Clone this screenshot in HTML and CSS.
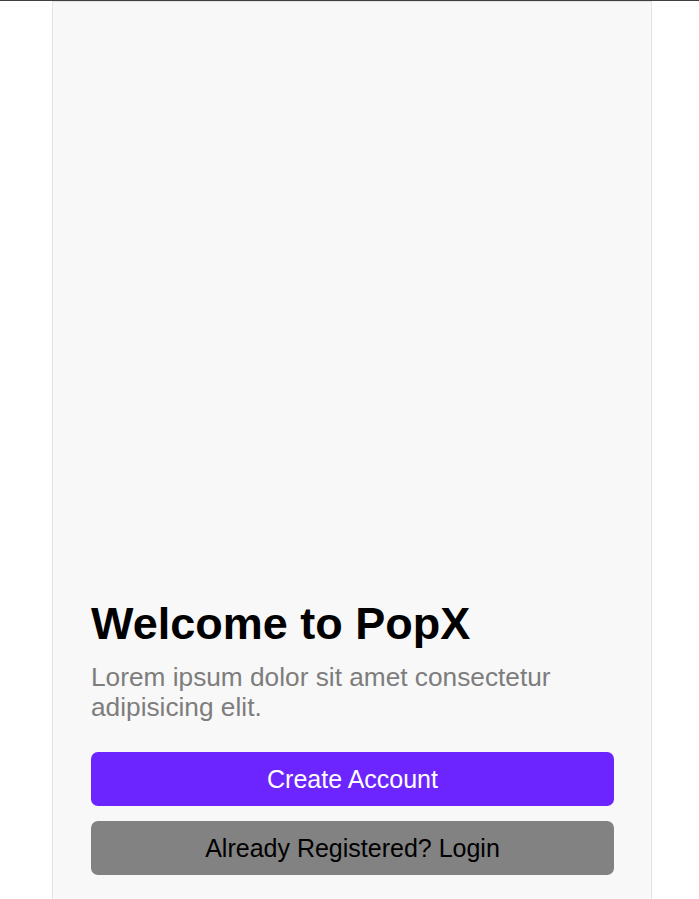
FILE: index.html
```html
<!DOCTYPE html>
<html lang="en">
<head>
<meta charset="utf-8">
<title>PopX</title>
<link rel="stylesheet" href="styles.css">
</head>
<body>
<div class="topline"></div>
<main class="card">
  <section class="welcome">
    <h1 class="title">Welcome to PopX</h1>
    <p class="lead">Lorem ipsum dolor sit amet consectetur adipisicing elit.</p>
    <div class="actions">
      <button class="btn btn-primary">Create Account</button>
      <button class="btn btn-secondary">Already Registered? Login</button>
    </div>
  </section>
</main>
</body>
</html>
```
FILE: styles.css
```css
html, body {
  margin: 0;
  padding: 0;
  height: 100%;
  overflow: hidden;
  background: #ffffff;
  font-family: "Liberation Sans", Arial, sans-serif;
}

.topline {
  height: 1px;
  background: #3c4043;
}

.card {
  box-sizing: border-box;
  width: 600px;
  height: 898px;
  margin-left: 52px;
  background: #f8f8f8;
  border: 1px solid #e2e2e2;
  border-bottom: none;
  padding: 0 37px 24px 38px;
  display: flex;
  flex-direction: column;
  justify-content: flex-end;
}

.welcome {
  display: flex;
  flex-direction: column;
}

.title {
  margin: 0;
  font-size: 45px;
  line-height: 52px;
  font-weight: 700;
  color: #000000;
}

.lead {
  margin: 12px 0 0 0;
  font-size: 26.25px;
  line-height: 30px;
  color: #7d7d7d;
}

.actions {
  margin-top: 30px;
  display: flex;
  flex-direction: column;
  gap: 15px;
}

.btn {
  height: 54px;
  border: none;
  border-radius: 7px;
  font-family: "Liberation Sans", Arial, sans-serif;
  font-size: 25px;
  padding: 0;
  display: flex;
  align-items: center;
  justify-content: center;
}

.btn-primary {
  background: #6c25ff;
  color: #ffffff;
}

.btn-secondary {
  background: #828282;
  color: #000000;
}
```
